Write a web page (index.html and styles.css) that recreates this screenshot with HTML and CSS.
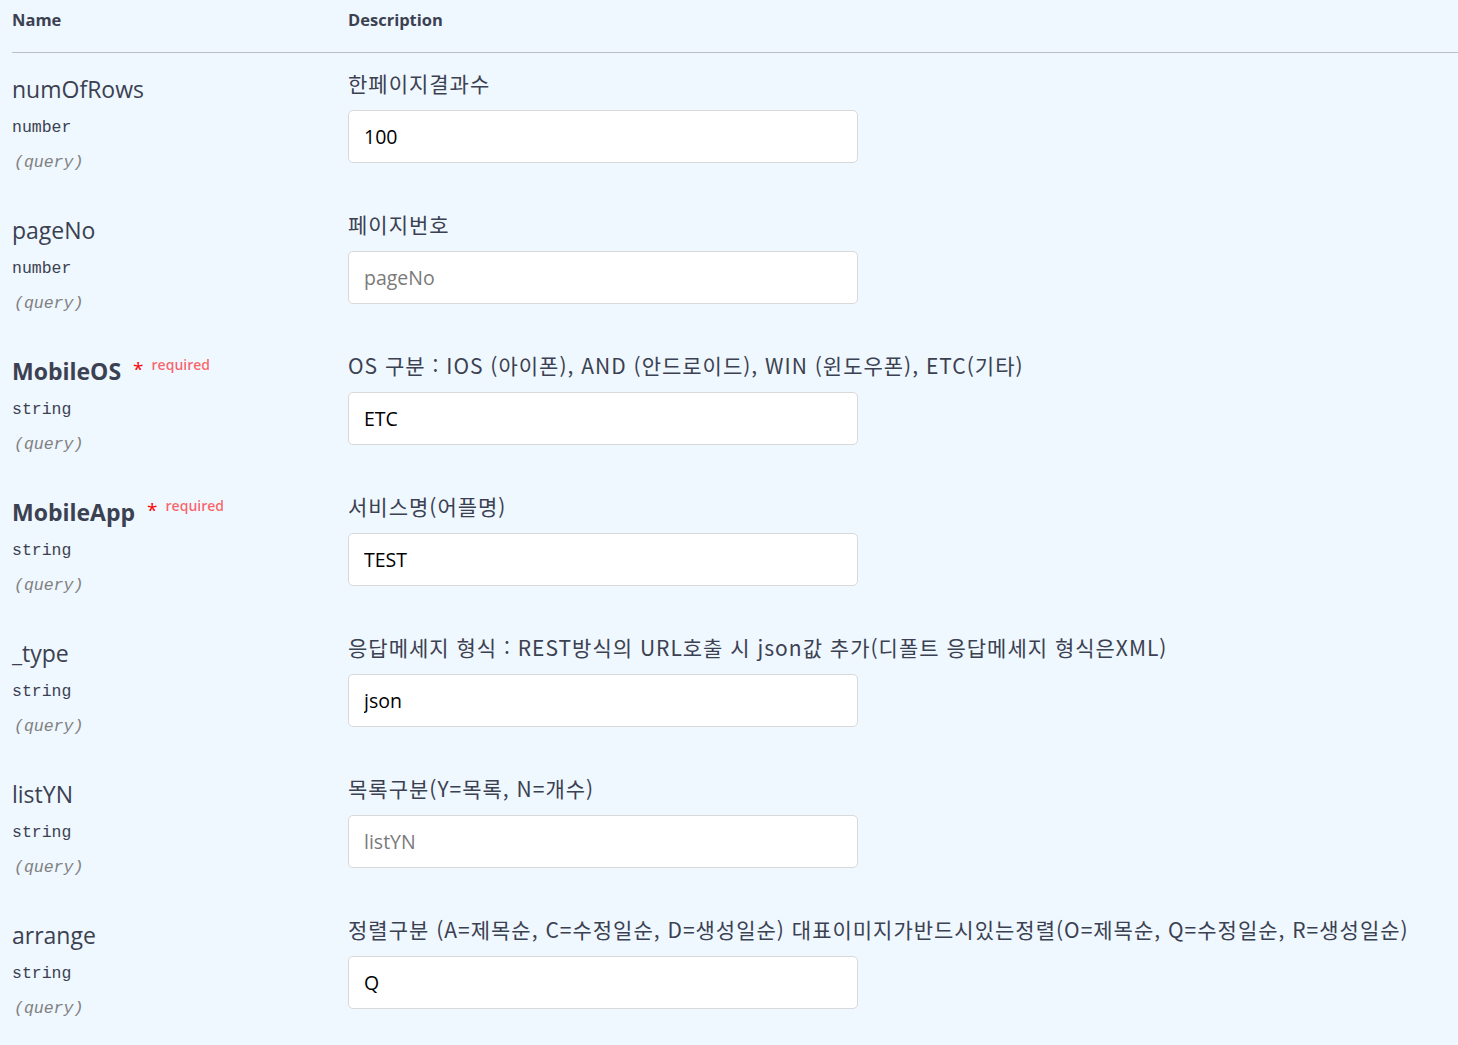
FILE: index.html
```html
<!DOCTYPE html>
<html lang="ko">
<head>
<meta charset="utf-8">
<title>Parameters</title>
<link rel="stylesheet" href="styles.css">
</head>
<body>
<div class="params">
  <div class="head">
    <div class="col-name">Name</div>
    <div class="col-desc">Description</div>
  </div>

  <div class="row">
    <div class="col-name">
      <div class="pname">numOfRows</div>
      <div class="ptype">number</div>
      <div class="pin">(query)</div>
    </div>
    <div class="col-desc">
      <div class="desc">한페이지결과수</div>
      <input class="field" type="text" value="100">
    </div>
  </div>

  <div class="row">
    <div class="col-name">
      <div class="pname">pageNo</div>
      <div class="ptype">number</div>
      <div class="pin">(query)</div>
    </div>
    <div class="col-desc">
      <div class="desc">페이지번호</div>
      <input class="field" type="text" placeholder="pageNo">
    </div>
  </div>

  <div class="row">
    <div class="col-name">
      <div class="pname req">MobileOS<span class="star">*</span><span class="reqtext">required</span></div>
      <div class="ptype">string</div>
      <div class="pin">(query)</div>
    </div>
    <div class="col-desc">
      <div class="desc">OS 구분 : IOS (아이폰), AND (안드로이드), WIN (윈도우폰), ETC(기타)</div>
      <input class="field" type="text" value="ETC">
    </div>
  </div>

  <div class="row">
    <div class="col-name">
      <div class="pname req">MobileApp<span class="star">*</span><span class="reqtext">required</span></div>
      <div class="ptype">string</div>
      <div class="pin">(query)</div>
    </div>
    <div class="col-desc">
      <div class="desc">서비스명(어플명)</div>
      <input class="field" type="text" value="TEST">
    </div>
  </div>

  <div class="row">
    <div class="col-name">
      <div class="pname">_type</div>
      <div class="ptype">string</div>
      <div class="pin">(query)</div>
    </div>
    <div class="col-desc">
      <div class="desc">응답메세지 형식 : REST방식의 URL호출 시 json값 추가(디폴트 응답메세지 형식은XML)</div>
      <input class="field" type="text" value="json">
    </div>
  </div>

  <div class="row">
    <div class="col-name">
      <div class="pname">listYN</div>
      <div class="ptype">string</div>
      <div class="pin">(query)</div>
    </div>
    <div class="col-desc">
      <div class="desc">목록구분(Y=목록, N=개수)</div>
      <input class="field" type="text" placeholder="listYN">
    </div>
  </div>

  <div class="row">
    <div class="col-name">
      <div class="pname">arrange</div>
      <div class="ptype">string</div>
      <div class="pin">(query)</div>
    </div>
    <div class="col-desc">
      <div class="desc">정렬구분 (A=제목순, C=수정일순, D=생성일순) 대표이미지가반드시있는정렬(O=제목순, Q=수정일순, R=생성일순)</div>
      <input class="field" type="text" value="Q">
    </div>
  </div>
</div>
</body>
</html>
```

FILE: styles.css
```css
html, body {
  margin: 0;
  padding: 0;
  background: #eff7ff;
}
body {
  font-family: "Open Sans", "Noto Sans CJK KR", sans-serif;
  color: #3b4151;
}
.params {
  padding-left: 12px;
}
.head {
  display: flex;
  height: 52px;
  border-bottom: 1px solid #b9bec7;
  align-items: flex-start;
}
.head .col-name,
.head .col-desc {
  font-size: 16.5px;
  font-weight: 700;
  line-height: 20px;
  padding-top: 10px;
}
.col-name {
  width: 336px;
  flex: none;
}
.col-desc {
  flex: 1;
}
.row {
  display: flex;
  height: 141px;
  box-sizing: border-box;
  padding-top: 16px;
}
.pname {
  font-size: 23px;
  line-height: 40px;
  height: 40px;
  white-space: nowrap;
}
.pname.req {
  font-weight: 700;
}
.star {
  color: #ff0000;
  font-size: 19px;
  font-weight: 400;
  position: relative;
  top: -4px;
  margin-left: 12px;
}
.reqtext {
  color: rgba(255, 0, 0, 0.6);
  font-size: 14px;
  font-weight: 600;
  position: relative;
  top: -10px;
  margin-left: 8px;
}
.ptype {
  margin-top: 7px;
  font-family: "Liberation Mono", "DejaVu Sans Mono", monospace;
  font-size: 16.5px;
  line-height: 24px;
  color: #3b4151;
}
.pin {
  margin-top: 11px;
  padding-left: 2px;
  font-family: "Liberation Mono", "DejaVu Sans Mono", monospace;
  font-size: 16.5px;
  font-style: italic;
  line-height: 24px;
  color: #808080;
}
.desc {
  font-family: "Noto Sans CJK KR", sans-serif;
  font-size: 21px;
  letter-spacing: 1px;
  line-height: 28px;
  height: 28px;
  white-space: nowrap;
}
.field {
  display: block;
  margin: 13px 0 0;
  width: 510px;
  height: 53px;
  box-sizing: border-box;
  padding: 0 15px;
  border: 1px solid #d9d9d9;
  border-radius: 5px;
  background: #fff;
  font-family: "Open Sans", "Noto Sans CJK KR", sans-serif;
  font-size: 19.5px;
  color: #000;
  outline: none;
}
.field::placeholder {
  color: #7a7a7a;
}
```
